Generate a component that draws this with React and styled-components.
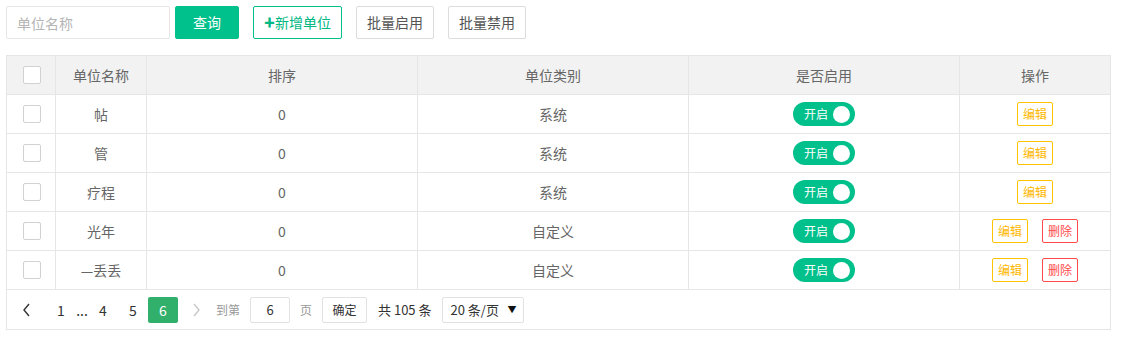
import React from "react";
import styled, { createGlobalStyle } from "styled-components";

const Global = createGlobalStyle`
  html, body { margin: 0; padding: 0; background: #fff; }
  body { font-family: "Noto Sans CJK SC", "Noto Sans", sans-serif; font-size: 14px; color: #666; }
  * { box-sizing: border-box; }
`;

const Page = styled.div`
  padding: 6px 16px 0 6px;
  width: 1127px;
`;

const Toolbar = styled.div`
  display: flex;
  align-items: center;
  height: 33px;
`;

const SearchInput = styled.input`
  width: 164px;
  height: 33px;
  border: 1px solid #e6e6e6;
  border-radius: 2px;
  padding: 0 10px;
  font: inherit;
  font-size: 14px;
  color: #666;
  outline: none;
  &::placeholder { color: #b5b5b5; }
`;

const Btn = styled.button`
  height: 33px;
  margin-left: ${(p) => p.$ml || 14}px;
  padding: 0 ${(p) => p.$px || 10}px;
  border: 1px solid ${(p) => (p.$variant === "primary" || p.$variant === "outline" ? "#00c08b" : "#dcdcdc")};
  background: ${(p) => (p.$variant === "primary" ? "#00c08b" : "#fff")};
  color: ${(p) => (p.$variant === "primary" ? "#fff" : p.$variant === "outline" ? "#00b884" : "#555")};
  border-radius: 2px;
  font: inherit;
  font-size: 14px;
  line-height: 31px;
  display: flex;
  align-items: center;
  cursor: pointer;
`;

const Plus = styled.span`
  font-weight: 900;
  font-size: 11px;
  margin-right: 0;
`;

const Table = styled.div`
  margin-top: 16px;
  width: 1105px;
  border: 1px solid #e6e6e6;
`;

const Row = styled.div`
  display: grid;
  grid-template-columns: 49px 91px 271px 271px 271px 1fr;
  height: 39px;
  border-bottom: 1px solid #e6e6e6;
  background: ${(p) => (p.$head ? "#f2f2f2" : "#fff")};
`;

const Cell = styled.div`
  display: flex;
  align-items: center;
  justify-content: center;
  gap: 14px;
  border-right: ${(p) => (p.$last ? "none" : "1px solid #e6e6e6")};
  color: #666;
  font-size: 14px;
  line-height: 20px;
`;

const Check = styled.span`
  width: 18px;
  height: 18px;
  border: 1px solid #d2d2d2;
  border-radius: 2px;
  background: #fff;
  display: inline-block;
  margin-left: 1px;
`;

const Switch = styled.span`
  position: relative;
  width: 62px;
  height: 24px;
  border-radius: 12px;
  background: #00c08b;
  color: #fff;
  font-size: 12px;
  line-height: 24px;
  padding-left: 11px;
  display: inline-block;
  &::after {
    content: "";
    position: absolute;
    right: 5px;
    top: 3.5px;
    width: 17px;
    height: 17px;
    border-radius: 50%;
    background: #fff;
  }
`;

const MiniBtn = styled.span`
  display: inline-block;
  height: 24px;
  padding: 0 5px;
  border: 1px solid ${(p) => (p.$danger ? "#ff4b4b" : "#ffc300")};
  color: ${(p) => (p.$danger ? "#ff4b4b" : "#ffb800")};
  border-radius: 2px;
  font-size: 12px;
  line-height: 22px;
  background: #fff;
`;

const Pager = styled.div`
  display: flex;
  align-items: center;
  height: 39px;
  padding-left: 5px;
  font-size: 14px;
  color: #333;
`;

const PageItem = styled.span`
  display: inline-flex;
  align-items: center;
  justify-content: center;
  width: ${(p) => p.$w || 30}px;
  height: 26px;
  margin-left: ${(p) => p.$ml || 0}px;
  border-radius: 2px;
  background: ${(p) => (p.$current ? "#31b06b" : "transparent")};
  color: ${(p) => (p.$current ? "#fff" : p.$muted ? "#999" : "#333")};
  font-size: 14px;
`;

const Label = styled.span`
  margin-left: ${(p) => p.$ml || 0}px;
  color: ${(p) => (p.$muted ? "#999" : "#333")};
  font-size: ${(p) => p.$fs || 12}px;
  white-space: pre;
`;

const JumpInput = styled.span`
  margin-left: 10px;
  width: 40px;
  height: 26px;
  border: 1px solid #e2e2e2;
  border-radius: 2px;
  display: inline-flex;
  align-items: center;
  justify-content: center;
  color: #333;
  font-size: 13px;
`;

const JumpBtn = styled.span`
  margin-left: 10px;
  width: 45px;
  height: 26px;
  border: 1px solid #e2e2e2;
  border-radius: 2px;
  display: inline-flex;
  align-items: center;
  justify-content: center;
  color: #333;
  font-size: 12px;
`;

const Select = styled.span`
  margin-left: 10px;
  width: 82px;
  height: 26px;
  border: 1px solid #e2e2e2;
  border-radius: 2px;
  display: inline-flex;
  align-items: center;
  justify-content: space-between;
  padding: 0 6px 0 8px;
  color: #333;
  font-size: 13px;
`;

const Caret = styled.span`
  font-size: 9px;
  color: #111;
`;

const Chevron = ({ dir, color }) => (
  <svg width="10" height="14" viewBox="0 0 10 14">
    <polyline
      points={dir === "left" ? "7,1 2,7 7,13" : "3,1 8,7 3,13"}
      fill="none"
      stroke={color}
      strokeWidth="1.4"
    />
  </svg>
);

const rows = [
  { name: "帖", type: "系统", del: false },
  { name: "管", type: "系统", del: false },
  { name: "疗程", type: "系统", del: false },
  { name: "光年", type: "自定义", del: true },
  { name: "—丢丢", type: "自定义", del: true },
];

export default function App() {
  return (
    <Page>
      <Global />
      <Toolbar>
        <SearchInput placeholder="单位名称" />
        <Btn $variant="primary" $ml={5} $px={17}>查询</Btn>
        <Btn $variant="outline"><Plus>✚</Plus>新增单位</Btn>
        <Btn>批量启用</Btn>
        <Btn>批量禁用</Btn>
      </Toolbar>
      <Table>
        <Row $head>
          <Cell><Check /></Cell>
          <Cell>单位名称</Cell>
          <Cell>排序</Cell>
          <Cell>单位类别</Cell>
          <Cell>是否启用</Cell>
          <Cell $last>操作</Cell>
        </Row>
        {rows.map((r) => (
          <Row key={r.name}>
            <Cell><Check /></Cell>
            <Cell>{r.name}</Cell>
            <Cell>0</Cell>
            <Cell>{r.type}</Cell>
            <Cell><Switch>开启</Switch></Cell>
            <Cell $last>
              <MiniBtn>编辑</MiniBtn>
              {r.del && <MiniBtn $danger>删除</MiniBtn>}
            </Cell>
          </Row>
        ))}
        <Pager>
          <PageItem><Chevron dir="left" color="#333" /></PageItem>
          <PageItem $ml={4}>1</PageItem>
          <PageItem $w={12}>...</PageItem>
          <PageItem>4</PageItem>
          <PageItem>5</PageItem>
          <PageItem $current>6</PageItem>
          <PageItem $ml={3}><Chevron dir="right" color="#c8c8c8" /></PageItem>
          <Label $ml={5} $muted>到第</Label>
          <JumpInput>6</JumpInput>
          <Label $ml={10} $muted>页</Label>
          <JumpBtn>确定</JumpBtn>
          <Label $ml={11} $fs={13}>共 105 条</Label>
          <Select>20 条/页<Caret>▼</Caret></Select>
        </Pager>
      </Table>
    </Page>
  );
}
